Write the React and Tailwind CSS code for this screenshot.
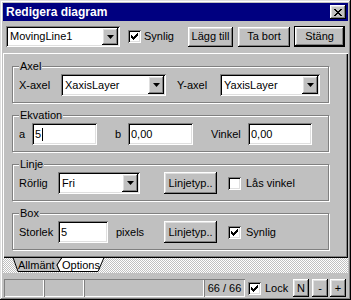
import React from "react";

// win95 bevels
const raised =
  "shadow-[inset_-1px_-1px_#000,inset_1px_1px_#fff,inset_-2px_-2px_#808080,inset_2px_2px_#dfdfdf]";
const sunken =
  "shadow-[inset_1px_1px_#808080,inset_-1px_-1px_#fff,inset_2px_2px_#000,inset_-2px_-2px_#dfdfdf]";
const thinSunken = "shadow-[inset_1px_1px_#808080,inset_-1px_-1px_#fff]";

const closeRows = [
  "11000011",
  "01100110",
  "00111100",
  "00011000",
  "00111100",
  "01100110",
  "11000011",
];

function CloseGlyph() {
  return (
    <svg width="8" height="7" viewBox="0 0 8 7" shapeRendering="crispEdges">
      {closeRows.map((row, y) =>
        row
          .split("")
          .map((c, x) =>
            c === "1" ? (
              <rect key={`${x}-${y}`} x={x} y={y} width="1" height="1" fill="#000" />
            ) : null
          )
      )}
    </svg>
  );
}

function CheckMark() {
  const tops = [2, 3, 4, 3, 2, 1, 0];
  return (
    <svg width="7" height="7" viewBox="0 0 7 7" shapeRendering="crispEdges">
      {tops.map((y, x) => (
        <rect key={x} x={x} y={y} width="1" height="3" fill="#000" />
      ))}
    </svg>
  );
}

function Checkbox({ checked }) {
  return (
    <span
      className={`flex h-[13px] w-[13px] shrink-0 items-center justify-center bg-white ${sunken}`}
    >
      {checked && <CheckMark />}
    </span>
  );
}

function Arrow() {
  return (
    <svg width="7" height="4" viewBox="0 0 7 4">
      <polygon points="0,0 7,0 3.5,4" fill="#000" />
    </svg>
  );
}

function Combo({ value, className }) {
  return (
    <div className={`flex shrink-0 bg-white p-[2px] ${sunken} ${className}`}>
      <span className="flex flex-1 items-center pl-[2px]">{value}</span>
      <span
        className={`flex w-[16px] items-center justify-center bg-[#c0c0c0] ${raised}`}
      >
        <Arrow />
      </span>
    </div>
  );
}

function Field({ value, caret, className }) {
  return (
    <div className={`flex shrink-0 items-center bg-white pl-[3px] ${sunken} ${className}`}>
      <span>{value}</span>
      {caret && <span className="ml-[1px] h-[13px] w-[1px] bg-black" />}
    </div>
  );
}

function Button({ children, className }) {
  return (
    <div
      className={`flex shrink-0 items-center justify-center bg-[#c0c0c0] ${raised} ${className}`}
    >
      {children}
    </div>
  );
}

function Group({ title, children }) {
  return (
    <div className="relative h-[37px] w-[317px] border border-[#808080] pl-[6px] pt-[7px] shadow-[1px_1px_0_#fff,inset_1px_1px_0_#fff]">
      <span className="absolute left-[6px] top-[-7px] bg-[#c0c0c0] px-[1px] leading-[13px]">
        {title}
      </span>
      <div className="flex h-[22px] items-center">{children}</div>
    </div>
  );
}

export default function App() {
  return (
    <div className="flex h-[300px] w-[351px] flex-col bg-[#c0c0c0] p-[3px] font-['Liberation_Sans',Arial,sans-serif] text-[11px] leading-[13px] text-black shadow-[inset_-1px_-1px_#000,inset_1px_1px_#dfdfdf,inset_-2px_-2px_#808080,inset_2px_2px_#fff]">
      {/* title bar */}
      <div className="flex h-[18px] shrink-0 items-center justify-between bg-[#000080] pl-[3px] pr-[2px]">
        <span className="text-[12px] font-bold text-white">Redigera diagram</span>
        <Button className="h-[14px] w-[16px]">
          <CloseGlyph />
        </Button>
      </div>

      {/* top row */}
      <div className="mt-[5px] flex h-[21px] shrink-0 items-center">
        <Combo value="MovingLine1" className="ml-[3px] h-[21px] w-[114px]" />
        <span className="ml-[8px]">
          <Checkbox checked />
        </span>
        <span className="ml-[3px]">Synlig</span>
        <div className="ml-auto mr-[3px] flex items-center">
          <Button className="h-[20px] w-[45px]">Lägg till</Button>
          <Button className="ml-[5px] h-[20px] w-[52px]">Ta bort</Button>
          <div className="ml-[4px] h-[21px] w-[51px] border border-black">
            <Button className="h-full w-full">Stäng</Button>
          </div>
        </div>
      </div>

      {/* page */}
      <div className="mt-[6px] flex h-[205px] shrink-0 flex-col gap-[12px] pl-[9px] pt-[13px] shadow-[inset_1px_1px_#fff,inset_-1px_-1px_#000,inset_-2px_-2px_#808080]">
        <Group title="Axel">
          <span className="w-[42px] shrink-0">X-axel</span>
          <Combo value="XaxisLayer" className="h-[22px] w-[105px]" />
          <span className="w-[54px] shrink-0 pl-[11px]">Y-axel</span>
          <Combo value="YaxisLayer" className="h-[22px] w-[100px]" />
        </Group>

        <Group title="Ekvation">
          <span className="w-[13px] shrink-0">a</span>
          <Field value="5" caret className="h-[22px] w-[65px]" />
          <span className="w-[31px] shrink-0 pl-[18px]">b</span>
          <Field value="0,00" className="h-[22px] w-[65px]" />
          <span className="w-[55px] shrink-0 pl-[18px]">Vinkel</span>
          <Field value="0,00" className="h-[22px] w-[64px]" />
        </Group>

        <Group title="Linje">
          <span className="w-[39px] shrink-0">Rörlig</span>
          <Combo value="Fri" className="h-[22px] w-[82px]" />
          <Button className="ml-[24px] h-[22px] w-[53px]">Linjetyp..</Button>
          <span className="ml-[11px]">
            <Checkbox />
          </span>
          <span className="ml-[5px]">Lås vinkel</span>
        </Group>

        <Group title="Box">
          <span className="w-[39px] shrink-0">Storlek</span>
          <Field value="5" className="h-[22px] w-[50px]" />
          <span className="w-[56px] shrink-0 pl-[8px]">pixels</span>
          <Button className="h-[22px] w-[53px]">Linjetyp..</Button>
          <span className="ml-[11px]">
            <Checkbox checked />
          </span>
          <span className="ml-[5px]">Synlig</span>
        </Group>
      </div>

      {/* sheet tabs */}
      <div className="relative flex h-[15px] shrink-0 items-center [background-image:repeating-conic-gradient(#c0c0c0_0%_25%,#ffffff_0%_50%)] [background-size:2px_2px]">
        <svg className="absolute left-0 top-0" width="110" height="15" viewBox="0 0 110 15">
          <polygon
            points="10,-0.5 15,13.5 57,13.5 54,7 59,-0.5"
            fill="#c0c0c0"
            stroke="#000"
            strokeWidth="1"
          />
          <polygon
            points="59,-0.5 54,7 57,13.5 95,13.5 101,-0.5"
            fill="#fff"
            stroke="#000"
            strokeWidth="1"
          />
        </svg>
        <span className="relative ml-[15px] w-[44px]">Allmänt</span>
        <span className="relative">Options</span>
      </div>

      {/* status bar */}
      <div className="flex flex-1 items-start pt-[6px]">
        <div className="flex h-[18px] w-full items-center">
          <div className={`ml-[1px] h-full w-[40px] ${thinSunken}`} />
          <div className={`h-full w-[40px] ${thinSunken}`} />
          <div className={`h-full w-[120px] ${thinSunken}`} />
          <div className={`flex h-full w-[41px] items-center justify-center ${thinSunken}`}>
            66 / 66
          </div>
          <span className="ml-[3px]">
            <Checkbox checked />
          </span>
          <span className="ml-[4px] w-[28px] shrink-0">Lock</span>
          <Button className="h-full w-[16px]">N</Button>
          <Button className="ml-[3px] h-full w-[16px]">-</Button>
          <Button className="ml-[2px] h-full w-[16px]">+</Button>
        </div>
      </div>
    </div>
  );
}
